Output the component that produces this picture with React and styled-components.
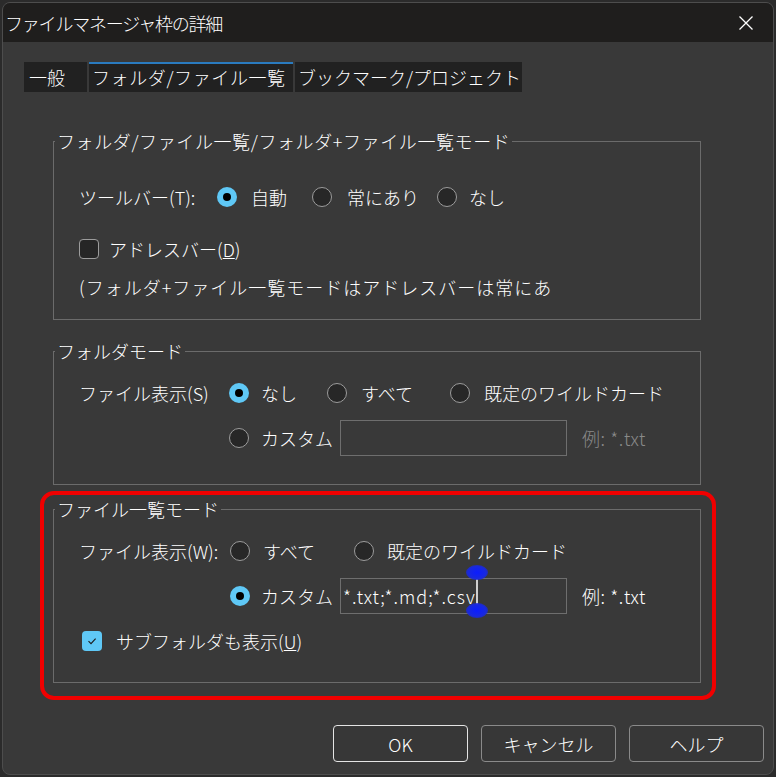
import React from "react";
import styled, { createGlobalStyle } from "styled-components";

const GlobalStyle = createGlobalStyle`
  html, body {
    margin: 0;
    padding: 0;
    background: #2b2b2b;
  }
  body {
    font-family: "Noto Sans CJK JP", "Noto Sans", sans-serif;
    font-weight: 300;
    color: #ffffff;
  }
  * {
    box-sizing: border-box;
  }
`;

const Page = styled.div`
  width: 776px;
  height: 777px;
  padding: 2px 0 0 2px;
`;

const Window = styled.div`
  width: 772px;
  height: 773px;
  background: #393939;
  border: 1px solid #4d4d4d;
  border-radius: 8px;
  overflow: hidden;
  display: flex;
  flex-direction: column;
`;

const TitleBar = styled.div`
  height: 39px;
  flex: none;
  background: #1f1e1d;
  display: flex;
  align-items: center;
  justify-content: space-between;
  padding: 0 19px 0 2px;
  font-size: 18px;
  letter-spacing: -1.2px;
  white-space: nowrap;
`;

const CloseIcon = () => (
  <svg width="16" height="16" viewBox="0 0 16 16">
    <path d="M1.5 1.5 L14.5 14.5 M14.5 1.5 L1.5 14.5" stroke="#ffffff" strokeWidth="1.3" fill="none" />
  </svg>
);

const Body = styled.div`
  flex: 1;
  display: flex;
  flex-direction: column;
  padding-top: 20px;
`;

const TabRow = styled.div`
  display: flex;
  gap: 2px;
  height: 30px;
  margin-left: 21px;
`;

const Tab = styled.div`
  width: ${(p) => p.$w}px;
  background: #212121;
  font-size: 18px;
  line-height: 30px;
  padding-left: ${(p) => p.$pl || 3}px;
  letter-spacing: ${(p) => p.$ls || 0}px;
  white-space: nowrap;
  box-shadow: ${(p) => (p.$active ? "inset 0 2px 0 #2a7bbf" : "none")};
`;

const Group = styled.fieldset`
  margin: ${(p) => p.$mt || 0}px 0 0 ${(p) => p.$ml || 0}px;
  padding: 0;
  width: 648px;
  min-width: 0;
  border: 1px solid #6b6b6b;
`;

const Legend = styled.legend`
  padding: 0 2px;
  margin-left: 1px;
  font-size: 18px;
  line-height: 22px;
  letter-spacing: ${(p) => p.$ls || 0}px;
  white-space: nowrap;
`;

const Content = styled.div`
  display: flex;
  flex-direction: column;
  padding: ${(p) => p.$pt}px 0 ${(p) => p.$pb}px 25px;
`;

const Row = styled.div`
  display: flex;
  align-items: center;
  height: ${(p) => p.$h || 30}px;
  margin-top: ${(p) => p.$mt || 0}px;
  font-size: 18px;
  letter-spacing: ${(p) => p.$ls || 0}px;
  white-space: nowrap;
`;

const Label = styled.div`
  width: ${(p) => p.$w}px;
  flex: none;
`;

const Option = styled.div`
  display: flex;
  align-items: center;
  gap: ${(p) => p.$gap || 13}px;
  width: ${(p) => (p.$w ? `${p.$w}px` : "auto")};
  flex: none;
`;

const Radio = styled.span`
  width: 20px;
  height: 20px;
  border-radius: 50%;
  flex: none;
  display: flex;
  align-items: center;
  justify-content: center;
  background: ${(p) => (p.$on ? "#5fc8f6" : "#272727")};
  border: ${(p) => (p.$on ? "none" : "1.5px solid #9c9c9c")};

  &::after {
    content: "";
    display: ${(p) => (p.$on ? "block" : "none")};
    width: 8px;
    height: 8px;
    border-radius: 50%;
    background: #000000;
  }
`;

const Check = styled.span`
  width: 20px;
  height: 20px;
  border-radius: 4px;
  flex: none;
  display: flex;
  align-items: center;
  justify-content: center;
  margin-left: ${(p) => p.$ml || 0}px;
  background: ${(p) => (p.$on ? "#5fc8f6" : "#262626")};
  border: ${(p) => (p.$on ? "none" : "1px solid #9c9c9c")};
`;

const CheckMark = () => (
  <svg width="12" height="12" viewBox="0 0 12 12">
    <path d="M2.5 6.2 L5 8.6 L9.6 3.6" stroke="#1b1b1b" strokeWidth="1.1" fill="none" />
  </svg>
);

const TextField = styled.div`
  width: 227px;
  height: 36px;
  flex: none;
  border: 1px solid #6e6e6e;
  background: #393939;
  display: flex;
  align-items: center;
  padding-left: 2px;
  font-size: 18px;
  color: #ffffff;
`;

const FieldText = styled.span`
  letter-spacing: 1px;
`;

const Caret = styled.span`
  position: relative;
  align-self: flex-start;
  width: 2px;
  height: 27px;
  margin-left: 0;
  background: #cfcfcf;

  &::before,
  &::after {
    content: "";
    position: absolute;
    left: 1px;
    width: 22px;
    height: 15px;
    margin-left: -11px;
    border-radius: 50%;
    background: radial-gradient(ellipse at center, #0b1dff 0%, #1828e0 55%, rgba(30, 40, 200, 0.3) 100%);
  }
  &::before {
    top: -14px;
  }
  &::after {
    top: 24px;
  }
`;

const Hint = styled.span`
  margin-left: 15px;
  letter-spacing: 0.6px;
  color: ${(p) => (p.$dim ? "#8a8a8a" : "#ffffff")};
`;

const Highlight = styled.div`
  width: 676px;
  margin: 6px 0 0 37px;
  border: 4px solid #f00000;
  border-radius: 14px;
  padding: 3px 11px 13px 9px;
`;

const ButtonRow = styled.div`
  display: flex;
  justify-content: flex-end;
  gap: 13px;
  margin-top: 25px;
  padding-right: 9px;
`;

const Button = styled.button`
  width: 135px;
  height: 37px;
  border-radius: 4px;
  border: 1px solid ${(p) => (p.$primary ? "#e4e4e4" : "#8a8a8a")};
  background: #373737;
  color: #ffffff;
  font-family: "Noto Sans CJK JP", "Noto Sans", sans-serif;
  font-weight: 300;
  font-size: 18px;
  padding: 0;
`;

export default function App() {
  return (
    <>
      <GlobalStyle />
      <Page>
        <Window>
          <TitleBar>
            <span>ファイルマネージャ枠の詳細</span>
            <CloseIcon />
          </TitleBar>
          <Body>
            <TabRow>
              <Tab $w={63} $pl={5}>一般</Tab>
              <Tab $w={204} $active $ls={0.6}>フォルダ/ファイル一覧</Tab>
              <Tab $w={227}>ブックマーク/プロジェクト</Tab>
            </TabRow>

            <Group $mt={38} $ml={50}>
              <Legend $ls={0.6}>フォルダ/ファイル一覧/フォルダ+ファイル一覧モード</Legend>
              <Content $pt={30} $pb={17}>
                <Row>
                  <Label $w={138}>ツールバー(T):</Label>
                  <Option $w={95} $gap={14}>
                    <Radio $on />
                    自動
                  </Option>
                  <Option $w={125} $gap={15}>
                    <Radio />
                    常にあり
                  </Option>
                  <Option $gap={12}>
                    <Radio />
                    なし
                  </Option>
                </Row>
                <Row $mt={22}>
                  <Option $gap={10}>
                    <Check />
                    <span>
                      アドレスバー(<u>D</u>)
                    </span>
                  </Option>
                </Row>
                <Row $mt={8} $ls={1}>
                  (フォルダ+ファイル一覧モードはアドレスバーは常にあ
                </Row>
              </Content>
            </Group>

            <Group $mt={20} $ml={50}>
              <Legend>フォルダモード</Legend>
              <Content $pt={16} $pb={28}>
                <Row>
                  <Label $w={150}>ファイル表示(S)</Label>
                  <Option $w={98} $gap={12}>
                    <Radio $on />
                    なし
                  </Option>
                  <Option $w={123} $gap={14}>
                    <Radio />
                    すべて
                  </Option>
                  <Option $gap={14}>
                    <Radio />
                    既定のワイルドカード
                  </Option>
                </Row>
                <Row $h={36} $mt={12}>
                  <Label $w={150} />
                  <Option $w={111} $gap={12}>
                    <Radio />
                    カスタム
                  </Option>
                  <TextField />
                  <Hint $dim>例: *.txt</Hint>
                </Row>
              </Content>
            </Group>

            <Highlight>
              <Group>
                <Legend>ファイル一覧モード</Legend>
                <Content $pt={16} $pb={26}>
                  <Row>
                    <Label $w={151}>ファイル表示(W):</Label>
                    <Option $w={124} $gap={13}>
                      <Radio />
                      すべて
                    </Option>
                    <Option $gap={13}>
                      <Radio />
                      既定のワイルドカード
                    </Option>
                  </Row>
                  <Row $h={36} $mt={12}>
                    <Label $w={151} />
                    <Option $w={110} $gap={11}>
                      <Radio $on />
                      カスタム
                    </Option>
                    <TextField>
                      <FieldText>*.txt;*.md;*.csv</FieldText>
                      <Caret />
                    </TextField>
                    <Hint>例: *.txt</Hint>
                  </Row>
                  <Row $mt={12}>
                    <Option $gap={14}>
                      <Check $on $ml={3}>
                        <CheckMark />
                      </Check>
                      <span>
                        サブフォルダも表示(<u>U</u>)
                      </span>
                    </Option>
                  </Row>
                </Content>
              </Group>
            </Highlight>

            <ButtonRow>
              <Button $primary>OK</Button>
              <Button>キャンセル</Button>
              <Button>ヘルプ</Button>
            </ButtonRow>
          </Body>
        </Window>
      </Page>
    </>
  );
}
